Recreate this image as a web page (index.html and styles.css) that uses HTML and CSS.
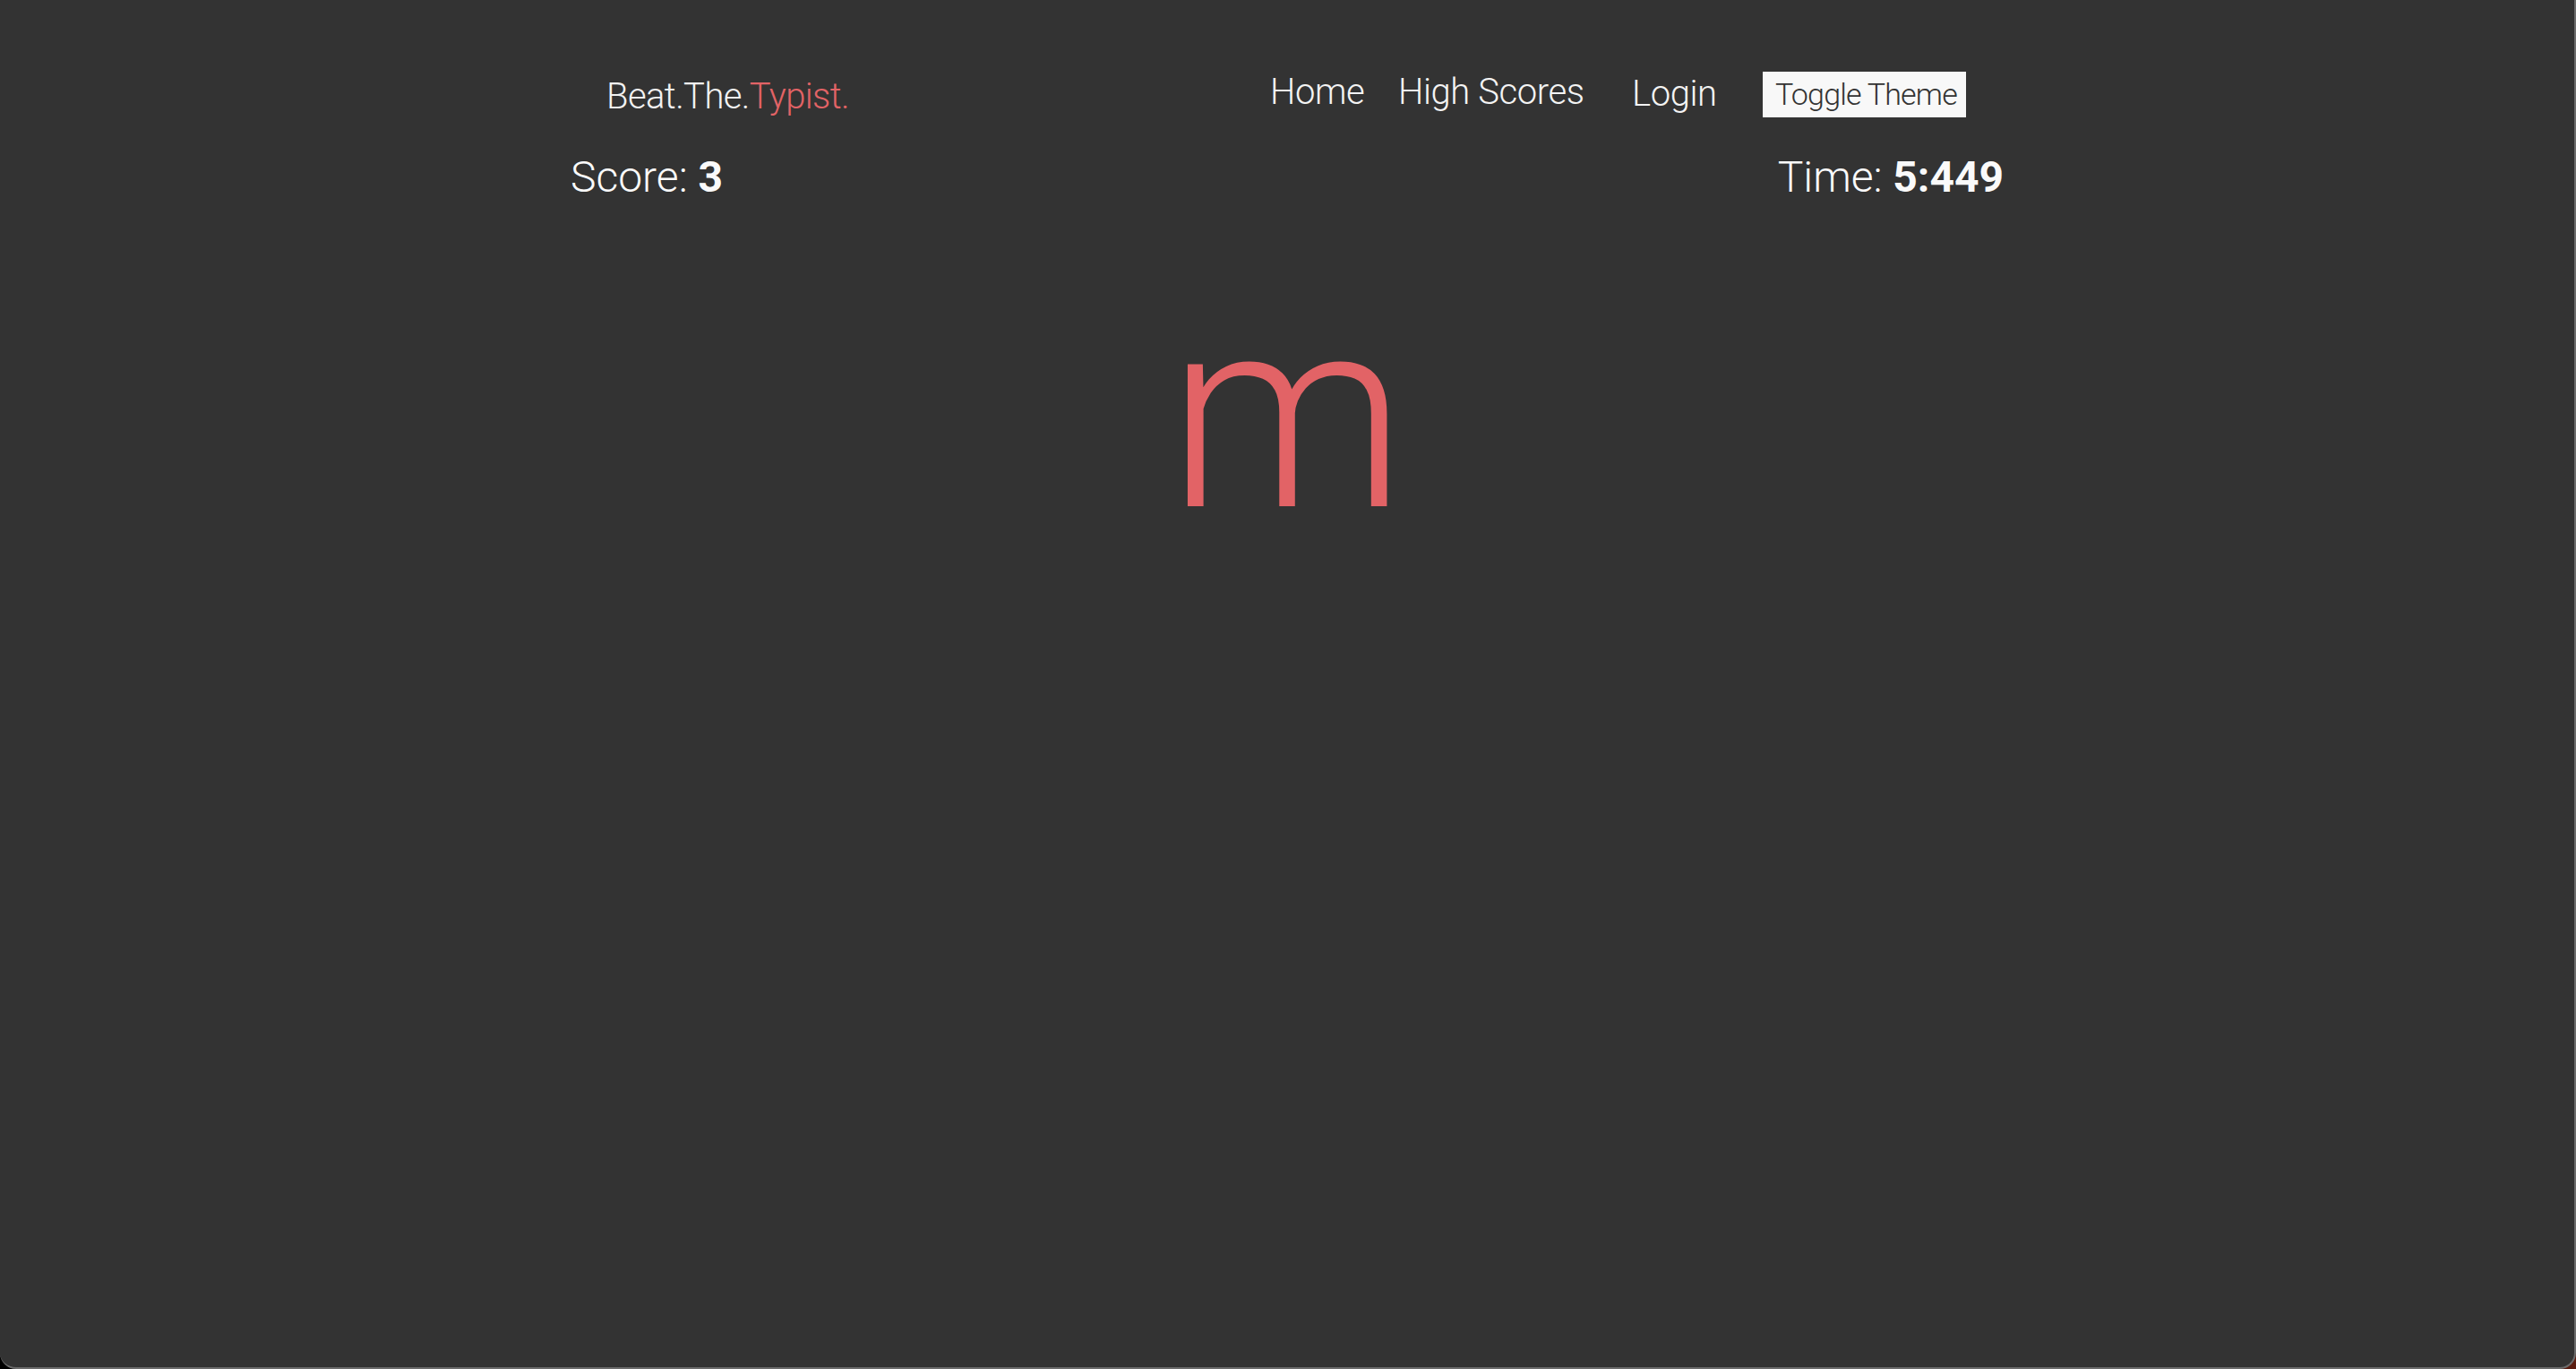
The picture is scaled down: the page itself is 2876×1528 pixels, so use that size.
FILE: index.html
```html
<!DOCTYPE html>
<html lang="en">
<head>
<meta charset="utf-8">
<title>Beat.The.Typist.</title>
<link rel="stylesheet" href="styles.css">
</head>
<body>
<div class="window">
  <div class="container">
    <header class="header">
      <div class="logo">Beat.The.<span class="accent">Typist.</span></div>
      <nav class="nav">
        <a class="nav-link w-home" href="#">Home</a>
        <a class="nav-link w-high" href="#">High Scores</a>
        <a class="nav-link w-login" href="#">Login</a>
        <button class="toggle">Toggle Theme</button>
      </nav>
    </header>
    <div class="stats">
      <div class="stat">Score: <b>3</b></div>
      <div class="stat">Time: <b>5:449</b></div>
    </div>
    <div class="letter">m</div>
  </div>
</div>
</body>
</html>
```

FILE: styles.css
```css
html, body {
  margin: 0;
  padding: 0;
}
body {
  background: linear-gradient(to right, #000 0%, #111 60%, #5a1c10 100%);
  font-family: Roboto, "Liberation Sans", sans-serif;
  font-weight: 300;
  color: #f4f4f4;
}
.window {
  height: 1528px;
  box-sizing: border-box;
  background: #333333;
  border-right: 2px solid #6c6c6c;
  border-bottom: 2px solid #6c6c6c;
  border-radius: 0 0 18px 18px;
  overflow: hidden;
}
.container {
  width: 1600px;
  margin: 0 auto;
}
.header {
  display: flex;
  align-items: flex-start;
  justify-content: space-between;
  padding-top: 80px;
  padding-left: 40px;
  padding-right: 42px;
}
.logo {
  font-size: 40px;
  line-height: 48px;
  letter-spacing: -0.6px;
  margin-top: 4px;
  color: #f2f2f2;
}
.accent {
  color: #e26366;
}
.nav {
  display: flex;
  align-items: flex-start;
}
.nav-link {
  display: block;
  color: #f4f4f4;
  text-decoration: none;
  font-size: 40px;
  line-height: 48px;
  letter-spacing: -0.4px;
  white-space: nowrap;
  margin-top: -1px;
}
.w-home { width: 143px; }
.w-high { width: 261px; }
.w-login { width: 146px; margin-top: 1px; }
.toggle {
  width: 227px;
  height: 51px;
  border: 0;
  padding: 0 0 0 14px;
  margin: 0;
  background: #f8f8f8;
  color: #333;
  font-family: inherit;
  font-weight: 300;
  font-size: 34px;
  line-height: 51px;
  letter-spacing: -0.8px;
  text-align: left;
  white-space: nowrap;
  overflow: hidden;
}
.stats {
  display: flex;
  justify-content: space-between;
  margin-top: 37px;
}
.stat {
  font-size: 48px;
  line-height: 58px;
  color: #fafafa;
}
.stat b {
  font-weight: 700;
}
.letter {
  text-align: center;
  font-size: 300px;
  line-height: 360px;
  color: #e26366;
  margin-top: 56px;
}
```
